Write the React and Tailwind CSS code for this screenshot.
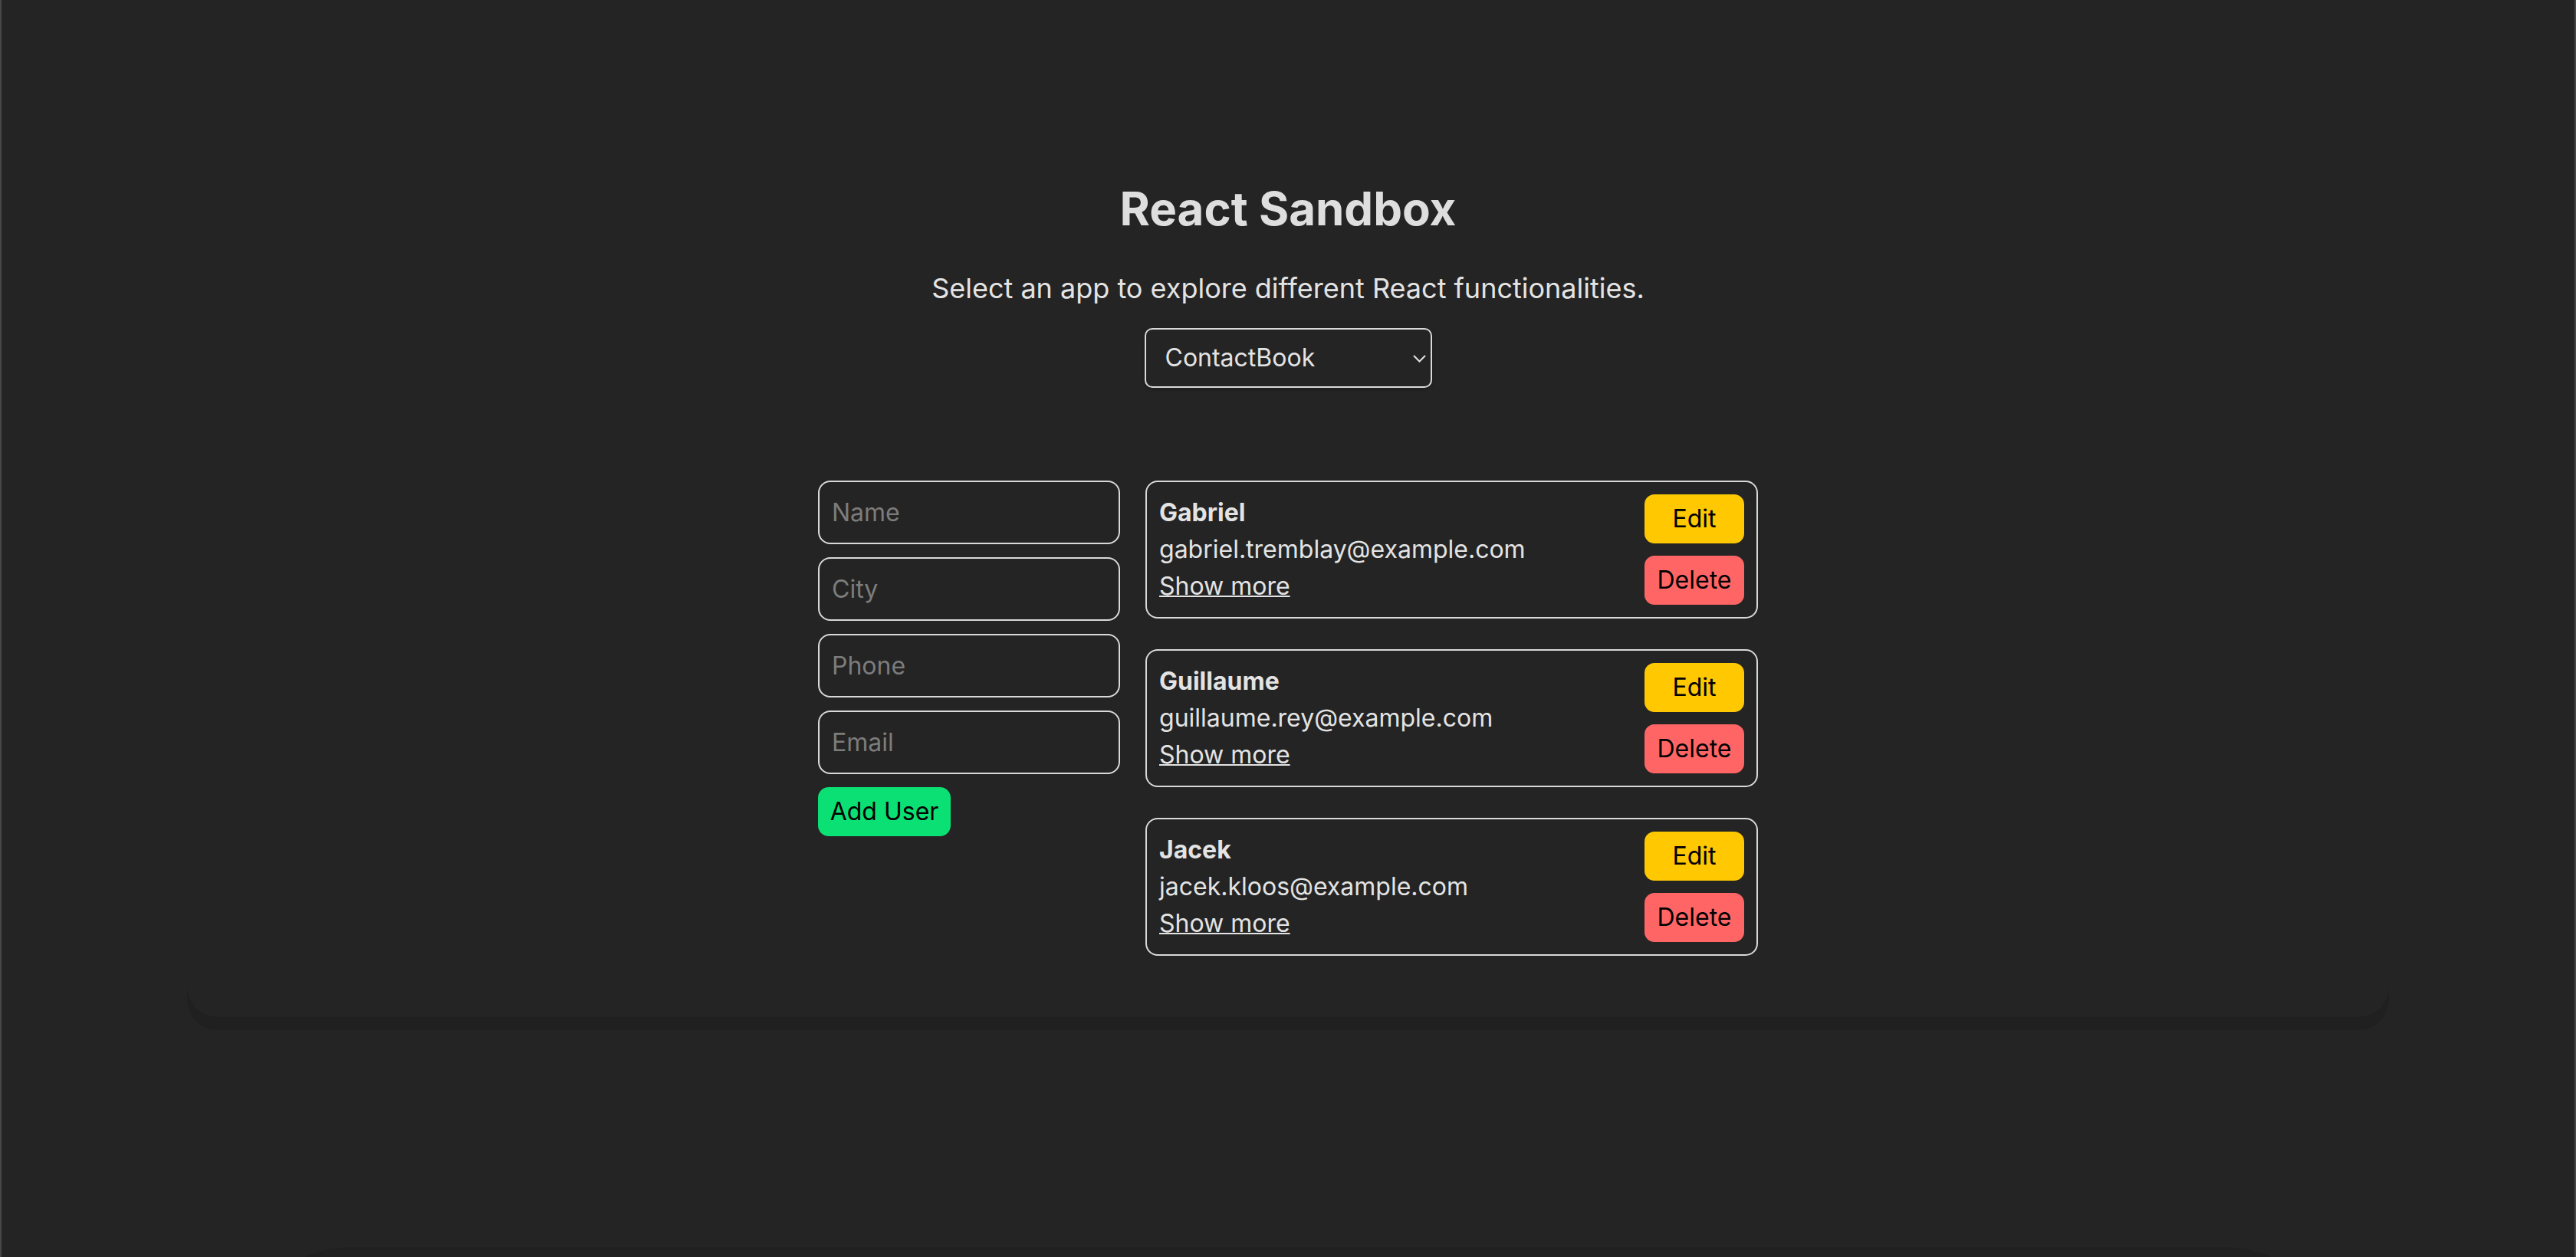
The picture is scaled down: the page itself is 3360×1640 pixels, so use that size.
import React from "react";

const contacts = [
  { name: "Gabriel", email: "gabriel.tremblay@example.com" },
  { name: "Guillaume", email: "guillaume.rey@example.com" },
  { name: "Jacek", email: "jacek.kloos@example.com" },
];

function Field({ placeholder }) {
  return (
    <input
      placeholder={placeholder}
      className="w-[394px] h-[83px] box-border border-2 border-[#d9d9d9] rounded-[16px] bg-transparent px-[16px] text-[32px] leading-[48px] text-[#e3e3e3] placeholder:text-[#7c7c7c] outline-none"
    />
  );
}

function ContactCard({ name, email }) {
  return (
    <div className="w-[799px] box-border border-2 border-[#d9d9d9] rounded-[16px] p-[16px] flex justify-between">
      <div className="flex flex-col text-[32px] leading-[48px]">
        <span className="font-bold">{name}</span>
        <span>{email}</span>
        <span className="underline decoration-2 self-start">Show more</span>
      </div>
      <div className="flex flex-col gap-[16px]">
        <button className="w-[130px] h-[64px] rounded-[13px] bg-[#ffc800] text-black text-[32px] leading-[48px]">
          Edit
        </button>
        <button className="w-[130px] h-[64px] rounded-[13px] bg-[#ff6565] text-black text-[32px] leading-[48px]">
          Delete
        </button>
      </div>
    </div>
  );
}

export default function App() {
  return (
    <div className="h-screen overflow-hidden bg-[#242424] border-x-2 border-[#474747] font-['Inter',sans-serif] text-[#e3e3e3]">
      <div className="pt-[100px] flex flex-col items-center">
        <div className="w-[2872px] rounded-[40px] bg-[#242424] shadow-[0_17px_0_#202020] pt-[136px] pb-[80px] flex flex-col items-center">
          <h1 className="text-[60px] leading-[72px] font-bold text-[#dedede]">React Sandbox</h1>
          <p className="mt-[41px] text-[36px] leading-[54px]">
            Select an app to explore different React functionalities.
          </p>
          <div className="relative mt-[25px] w-[375px] h-[78px] shadow-[0_2px_4px_rgba(0,0,0,0.25)] rounded-[10px]">
            <select
              defaultValue="ContactBook"
              className="appearance-none w-full h-full box-border border-2 border-[#d9d9d9] rounded-[10px] bg-[#242424] pl-[25px] pr-[40px] text-[32px] text-[#e3e3e3] outline-none"
            >
              <option>ContactBook</option>
              <option>Counter</option>
              <option>TodoList</option>
            </select>
            <svg
              className="absolute right-[8px] top-[35px] pointer-events-none"
              width="17"
              height="10"
              viewBox="0 0 17 10"
              fill="none"
            >
              <polyline points="1,1 8.5,8.5 16,1" stroke="#e3e3e3" strokeWidth="2" />
            </svg>
          </div>
          <div className="mt-[121px] flex items-start gap-[33px]">
            <div className="flex flex-col gap-[17px] items-start">
              <Field placeholder="Name" />
              <Field placeholder="City" />
              <Field placeholder="Phone" />
              <Field placeholder="Email" />
              <button className="w-[173px] h-[64px] rounded-[14px] bg-[#0be074] text-black text-[32px] leading-[48px]">
                Add User
              </button>
            </div>
            <div className="flex flex-col gap-[40px]">
              {contacts.map((c) => (
                <ContactCard key={c.name} {...c} />
              ))}
            </div>
          </div>
        </div>
        <div className="mt-[300px] w-[2742px] h-[200px] shrink-0 rounded-t-[150px] bg-[#202020]" />
      </div>
    </div>
  );
}
